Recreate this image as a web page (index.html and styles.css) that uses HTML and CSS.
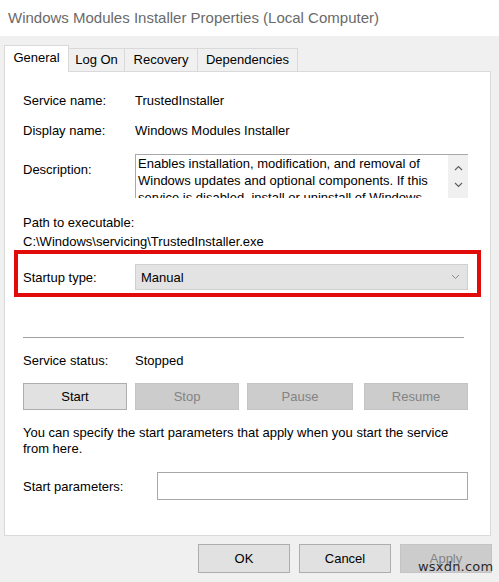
FILE: index.html
```html
<!DOCTYPE html>
<html>
<head>
<meta charset="utf-8">
<link rel="stylesheet" href="styles.css">
</head>
<body>
<div class="window">
  <div class="titlebar">Windows Modules Installer Properties (Local Computer)</div>
  <div class="tabs">
    <div class="tab selected t-general">General</div>
    <div class="tab t-logon">Log On</div>
    <div class="tab t-recovery">Recovery</div>
    <div class="tab t-deps">Dependencies</div>
  </div>
  <div class="panel">
    <div class="row r-first">
      <div class="label">Service name:</div>
      <div class="value">TrustedInstaller</div>
    </div>
    <div class="row r-display">
      <div class="label">Display name:</div>
      <div class="value">Windows Modules Installer</div>
    </div>
    <div class="row r-desc">
      <div class="label desc-label">Description:</div>
      <div class="descbox">
        <div class="desctext">Enables installation, modification, and removal of Windows updates and optional components. If this service is disabled, install or uninstall of Windows updates might fail for this computer.</div>
        <div class="scrollbar">
          <svg class="arrow" width="9" height="6" viewBox="0 0 9 6"><path d="M1 5 L4.5 1.5 L8 5" fill="none" stroke="#606060" stroke-width="1.2"/></svg>
          <svg class="arrow" width="9" height="6" viewBox="0 0 9 6"><path d="M1 1 L4.5 4.5 L8 1" fill="none" stroke="#606060" stroke-width="1.2"/></svg>
        </div>
      </div>
    </div>
    <div class="path-label">Path to executable:</div>
    <div class="path-value">C:\Windows\servicing\TrustedInstaller.exe</div>
    <div class="highlight">
      <div class="label">Startup type:</div>
      <div class="combo">
        <span>Manual</span>
        <svg width="9" height="6" viewBox="0 0 9 6"><path d="M1 1 L4.5 4.5 L8 1" fill="none" stroke="#8a8a8a" stroke-width="1"/></svg>
      </div>
    </div>
    <div class="separator"></div>
    <div class="row r-status">
      <div class="label">Service status:</div>
      <div class="value">Stopped</div>
    </div>
    <div class="svc-buttons">
      <div class="btn">Start</div>
      <div class="btn disabled">Stop</div>
      <div class="btn disabled">Pause</div>
      <div class="btn disabled">Resume</div>
    </div>
    <div class="hint">You can specify the start parameters that apply when you start the service from here.</div>
    <div class="row r-params">
      <div class="label params-label">Start parameters:</div>
      <div class="input"></div>
    </div>
  </div>
  <div class="footer">
    <div class="btn fbtn">OK</div>
    <div class="btn fbtn">Cancel</div>
    <div class="btn fbtn disabled">Apply</div>
  </div>
  <div class="watermark">wsxdn.com</div>
</div>
</body>
</html>
```
FILE: styles.css
```css
* { box-sizing: border-box; }
html, body { margin: 0; padding: 0; }
body {
  width: 499px;
  height: 582px;
  overflow: hidden;
  background: #f0f0f0;
  font-family: "Liberation Sans", Arial, sans-serif;
  font-size: 13px;
  color: #000;
}
.window {
  position: relative;
  width: 499px;
  height: 582px;
  background: #f0f0f0;
}
.titlebar {
  height: 36px;
  background: #ffffff;
  color: #6a6a6a;
  font-size: 15px;
  line-height: 36px;
  padding-left: 8px;
  white-space: nowrap;
}
.tabs {
  display: flex;
  align-items: flex-end;
  padding-left: 4px;
  margin-top: 9px;
  height: 26px;
}
.tab {
  height: 23px;
  line-height: 21px;
  text-align: center;
  border: 1px solid #d9d9d9;
  border-bottom: none;
  border-left: none;
  background: #f0f0f0;
  white-space: nowrap;
}
.tab.selected {
  height: 27px;
  line-height: 23px;
  background: #ffffff;
  border-left: 1px solid #d9d9d9;
  margin-bottom: -1px;
  position: relative;
  z-index: 1;
}
.t-general { width: 65px; }
.t-logon { width: 56px; }
.t-recovery { width: 73px; }
.t-deps { width: 100px; }
.panel {
  margin-left: 4px;
  width: 487px;
  height: 465px;
  background: #ffffff;
  border: 1px solid #d9d9d9;
  padding-top: 20px;
}
.row {
  display: flex;
  line-height: 17px;
}
.label {
  width: 112px;
  padding-left: 18px;
  flex-shrink: 0;
  white-space: nowrap;
}
.row > .label { width: 130px; }
.value { white-space: nowrap; }
.r-display { margin-top: 13px; }
.r-desc { margin-top: 15px; }
.desc-label { padding-top: 7px; }
.descbox {
  display: flex;
  width: 333px;
  height: 44px;
  border-top: 1px solid #a8a8a8;
  border-left: 1px solid #a8a8a8;
  overflow: hidden;
}
.desctext {
  flex: 1;
  padding-left: 2px;
  line-height: 17px;
  font-size: 13px;
  height: 43px;
  overflow: hidden;
}
.scrollbar {
  width: 20px;
  height: 43px;
  background: #f0f0f0;
  display: flex;
  flex-direction: column;
  align-items: center;
  justify-content: space-around;
  padding: 4px 0 4px;
}
.arrow { display: block; }
.path-label {
  margin-top: 16px;
  padding-left: 18px;
  line-height: 17px;
}
.path-value {
  margin-top: 2px;
  padding-left: 18px;
  line-height: 17px;
}
.highlight {
  margin-left: 9px;
  width: 467px;
  height: 47px;
  border: 4px solid #e20b0b;
  display: flex;
  align-items: center;
  padding-top: 7px;
}
.highlight .label {
  width: 117px;
  padding-left: 5px;
}
.combo {
  width: 333px;
  height: 26px;
  background: #e3e3e3;
  border: 1px solid #d0d0d0;
  display: flex;
  align-items: center;
  justify-content: space-between;
  padding: 0 7px 0 5px;
}
.separator {
  margin-top: 40px;
  margin-left: 18px;
  width: 441px;
  height: 1px;
  background: #a0a0a0;
}
.r-status { margin-top: 14px; }
.svc-buttons {
  margin-top: 14px;
  margin-left: 18px;
  display: flex;
  gap: 8px;
}
.btn {
  height: 27px;
  line-height: 25px;
  text-align: center;
  background: #e1e1e1;
  border: 1px solid #adadad;
  color: #000;
}
.svc-buttons .btn { width: 104px; }
.svc-buttons .btn:nth-child(3) { width: 106px; margin-right: 3px; }
.btn.disabled {
  background: #cccccc;
  border-color: #c4c4c4;
  color: #838383;
}
.hint {
  margin-top: 15px;
  padding-left: 18px;
  padding-right: 20px;
  line-height: 16px;
}
.r-params {
  margin-top: 15px;
  align-items: center;
}
.r-params > .label { width: 152px; }
.input {
  width: 311px;
  height: 28px;
  background: #ffffff;
  border: 1px solid #a8a8a8;
}
.footer {
  margin-top: 8px;
  display: flex;
  justify-content: flex-end;
  gap: 9px;
  padding-right: 7px;
}
.fbtn {
  width: 92px;
  height: 29px;
  line-height: 27px;
}
.watermark {
  position: absolute;
  left: 418px;
  top: 559px;
  font-family: "DejaVu Sans", sans-serif;
  font-size: 13px;
  color: #2a2a2a;
  letter-spacing: 0.2px;
}
```
